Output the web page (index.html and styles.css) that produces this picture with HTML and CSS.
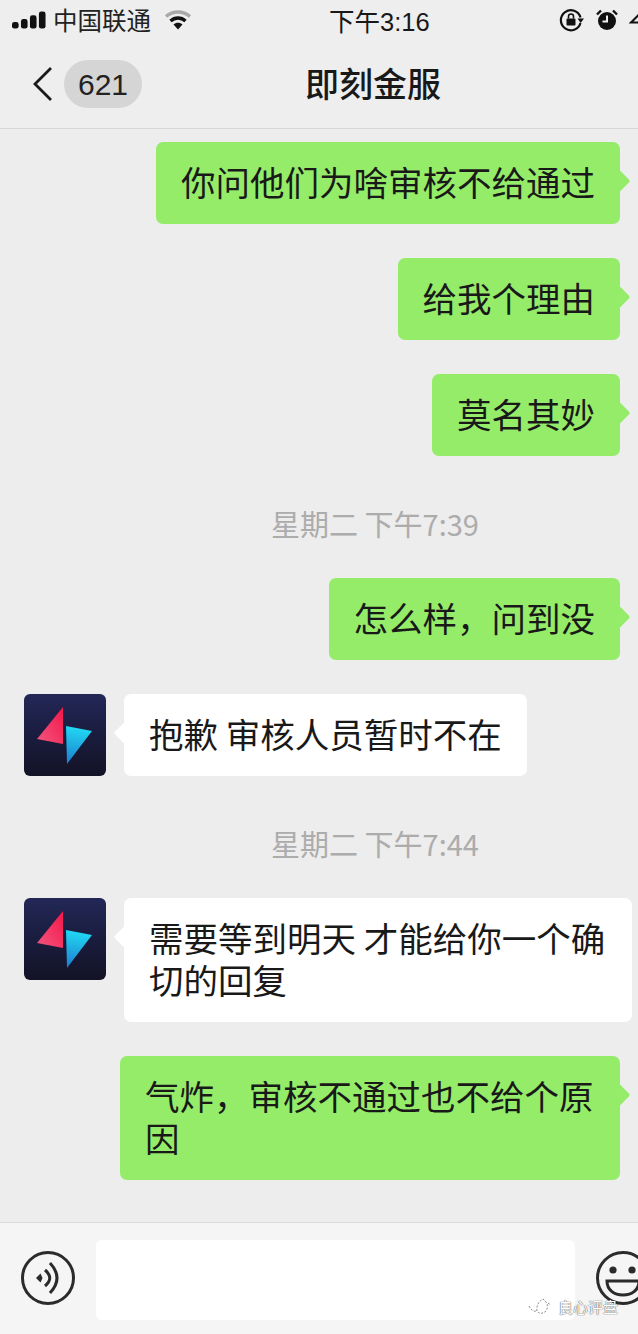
FILE: index.html
```html
<!DOCTYPE html>
<html lang="zh-CN">
<head>
    <meta charset="UTF-8">
    <meta name="viewport" content="width=device-width, initial-scale=1.0">
    <title>即刻金服</title>
    <link rel="stylesheet" href="styles.css">
</head>
<body>
    <div class="phone">
        <header class="top">
            <div class="status">
                <div class="status-left">
                    <svg class="signal" width="34" height="20" viewBox="0 0 36 20">
                        <rect x="0" y="11" width="7" height="7" rx="2.500" fill="#111"/>
                        <rect x="9.500" y="8" width="7" height="10" rx="2.500" fill="#111"/>
                        <rect x="19" y="4" width="7" height="14" rx="2.500" fill="#111"/>
                        <rect x="28.500" y="0" width="7" height="18" rx="2.500" fill="#111"/>
                    </svg>
                    <span class="carrier">中国联通</span>
                    <svg class="wifi" width="28" height="22" viewBox="0 0 28 22">
                        <path d="M2 7.500C9 1.500 19 1.500 26 7.500" fill="none" stroke="#a9a9a9" stroke-width="3.400"/>
                        <path d="M6.500 12C11 8 17 8 21.500 12" fill="none" stroke="#111" stroke-width="3.400"/>
                        <path d="M9.500 15.500C12 13.200 16 13.200 18.500 15.500L14 20.500Z" fill="#111"/>
                    </svg>
                </div>
                <span class="clock">下午3:16</span>
                <div class="status-right">
                    <svg width="26" height="24" viewBox="0 0 26 24">
                        <path d="M21.500 9.500A10 10 0 1 0 21.500 15" fill="none" stroke="#111" stroke-width="2.200"/>
                        <path d="M18.500 10.500H25L21.700 15Z" fill="#111"/>
                        <rect x="7.500" y="10.500" width="9" height="7" rx="1" fill="#111"/>
                        <path d="M9.500 10.500V8.500A2.500 2.500 0 0 1 14.500 8.500V10.500" fill="none" stroke="#111" stroke-width="1.600"/>
                    </svg>
                    <svg class="alarm" width="22" height="24" viewBox="0 0 22 24">
                        <circle cx="11" cy="13" r="9" fill="#111"/>
                        <path d="M11 7.500V13.500H6.500" fill="none" stroke="#efefef" stroke-width="2"/>
                        <path d="M1 6.500L5 2.500M21 6.500L17 2.500" stroke="#111" stroke-width="2.400"/>
                    </svg>
                    <svg class="location" width="12" height="22" viewBox="0 0 12 22">
                        <path d="M12 3.500L2 13.500H12" fill="none" stroke="#111" stroke-width="2.200"/>
                    </svg>
                </div>
            </div>
            <nav class="nav">
                <div class="nav-back">
                    <svg width="22" height="36" viewBox="0 0 22 36">
                        <path d="M19 2L3 18L19 34" fill="none" stroke="#1a1a1a" stroke-width="2.800"/>
                    </svg>
                    <span class="badge">621</span>
                </div>
                <h1 class="title">即刻金服</h1>
            </nav>
        </header>

        <main class="chat">
            <div class="row row-me"><p class="bubble me">你问他们为啥审核不给通过</p></div>
            <div class="row row-me"><p class="bubble me">给我个理由</p></div>
            <div class="row row-me"><p class="bubble me">莫名其妙</p></div>
            <div class="time">星期二 下午7:39</div>
            <div class="row row-me"><p class="bubble me">怎么样，问到没</p></div>
            <div class="row">
                <svg class="avatar" viewBox="0 0 82 82">
                    <use href="#logo"/>
                </svg>
                <p class="bubble them">抱歉 审核人员暂时不在</p>
            </div>
            <div class="time">星期二 下午7:44</div>
            <div class="row">
                <svg class="avatar" viewBox="0 0 82 82">
                    <use href="#logo"/>
                </svg>
                <p class="bubble them wide">需要等到明天 才能给你一个确切的回复</p>
            </div>
            <div class="row row-me"><p class="bubble me long">气炸，审核不通过也不给个原因</p></div>
        </main>

        <footer class="inputbar">
            <svg class="voice" width="54" height="54" viewBox="0 0 54 54">
                <circle cx="27" cy="27" r="25.500" fill="none" stroke="#2b2b2b" stroke-width="3"/>
                <path d="M15 27L19.500 22.500L21.500 27L19.500 31.500Z" fill="#2b2b2b"/>
                <path d="M24 19Q33.500 27 24 35M29 12Q43 27 29 42" fill="none" stroke="#2b2b2b" stroke-width="3"/>
            </svg>
            <div class="field"></div>
            <svg class="smile" width="54" height="54" viewBox="0 0 54 54">
                <circle cx="27" cy="27" r="25.500" fill="none" stroke="#2b2b2b" stroke-width="3"/>
                <circle cx="17" cy="19" r="3.600" fill="#2b2b2b"/>
                <circle cx="36" cy="19" r="3.600" fill="#2b2b2b"/>
                <path d="M11 30H43C43 39 36 44 27 44C18 44 11 39 11 30Z" fill="none" stroke="#2b2b2b" stroke-width="3"/>
            </svg>
        </footer>

        <div class="watermark">
            <svg width="24" height="20" viewBox="0 0 24 20">
                <path d="M1 9C3 13 6 15 9 14M9 14C8 9 11 4 15 2C19 5 21 9 18 14C15 17 11 17 9 14ZM20 6L23 8" fill="none" stroke="#8a8a8a" stroke-width="1" stroke-dasharray="2 1.500"/>
            </svg>
            <span>良心评盘</span>
        </div>

        <svg class="defs" width="0" height="0">
            <defs>
                <linearGradient id="logoBg" x1="0" y1="0" x2="0" y2="1">
                    <stop offset="0" stop-color="#222756"/>
                    <stop offset="1" stop-color="#131226"/>
                </linearGradient>
                <linearGradient id="logoRed" x1="1" y1="0" x2="0" y2="1">
                    <stop offset="0" stop-color="#f5174a"/>
                    <stop offset="1" stop-color="#f0567f"/>
                </linearGradient>
                <linearGradient id="logoBlue" x1="0.500" y1="0" x2="0.400" y2="1">
                    <stop offset="0" stop-color="#21dcf4"/>
                    <stop offset="1" stop-color="#1e7fd0"/>
                </linearGradient>
                <g id="logo">
                    <rect width="82" height="82" rx="6" fill="url(#logoBg)"/>
                    <path d="M39 13V50L13 45Z" fill="url(#logoRed)"/>
                    <path d="M42 32L68 37L43 70Z" fill="url(#logoBlue)"/>
                </g>
            </defs>
        </svg>
    </div>
</body>
</html>
```

FILE: styles.css
```css
* {
    margin: 0;
    padding: 0;
    box-sizing: border-box;
}
body {
    width: 638px;
    height: 1334px;
    overflow: hidden;
    background-color: #ededed;
    color: #191919;
    font-family: "Noto Sans CJK SC", "Liberation Sans", sans-serif;
}
.phone {
    position: relative;
    display: flex;
    flex-direction: column;
    width: 638px;
    height: 1334px;
    overflow: hidden;
}

/* top */
.top {
    height: 129px;
    flex: none;
    background-color: #eeeeee;
    border-bottom: 1px solid #d6d6d6;
}
.status {
    display: grid;
    grid-template-columns: 317px auto 1fr;
    align-items: center;
    height: 42px;
    padding-left: 12px;
}
.status-left {
    display: flex;
    align-items: center;
}
.carrier {
    margin-left: 7px;
    margin-bottom: 4px;
    font-size: 24.500px;
    color: #222;
}
.wifi {
    margin-left: 13px;
    margin-bottom: 2px;
}
.clock {
    margin-bottom: 4px;
    font-family: "Liberation Sans", "Noto Sans CJK SC", sans-serif;
    font-size: 25.500px;
    color: #191919;
}
.status-right {
    display: flex;
    align-items: center;
    justify-content: flex-end;
    gap: 12px;
    margin-right: -3px;
    margin-bottom: 2px;
}
.alarm {
    margin-left: -1px;
}
.location {
    margin-left: -1px;
}
.nav {
    display: flex;
    align-items: center;
    justify-content: center;
    position: relative;
    height: 86px;
}
.nav-back {
    position: absolute;
    left: 32px;
    top: 18px;
    display: flex;
    align-items: center;
    gap: 10px;
}
.badge {
    width: 78px;
    height: 48px;
    border-radius: 24px;
    background-color: #d5d5d5;
    font-family: "Liberation Sans", sans-serif;
    font-size: 30px;
    line-height: 50px;
    text-align: center;
    color: #222;
}
.title {
    margin-left: 108px;
    margin-bottom: 6px;
    font-size: 34px;
    font-weight: 500;
    color: #191919;
}

/* messages */
.chat {
    flex: 1;
    padding-top: 13px;
}
.row {
    display: flex;
    align-items: flex-start;
    padding-left: 24px;
    margin-bottom: 34px;
}
.row-me {
    justify-content: flex-end;
    padding-right: 18px;
    padding-left: 0;
}
.bubble {
    position: relative;
    padding: 18px 25px 22px;
    border-radius: 7px;
    font-size: 34.500px;
    line-height: 42px;
    color: #191919;
}
.bubble::after {
    content: "";
    position: absolute;
    top: 31px;
    width: 16px;
    height: 16px;
    transform: rotate(45deg);
    border-radius: 2px;
}
.me {
    background-color: #95ec69;
}
.me::after {
    right: -7px;
    background-color: #95ec69;
}
.them {
    margin-left: 18px;
    background-color: #fff;
}
.them::after {
    left: -7px;
    background-color: #fff;
}
.wide {
    width: 508px;
}
.long {
    width: 500px;
}
.avatar {
    width: 82px;
    height: 82px;
    flex: none;
}
.time {
    margin-top: 47px;
    margin-bottom: 35px;
    height: 40px;
    line-height: 40px;
    padding-left: 112px;
    text-align: center;
    font-size: 29px;
    color: #acacac;
}

/* bottom */
.inputbar {
    display: flex;
    align-items: flex-start;
    flex: none;
    height: 112px;
    padding: 17px 0 0 21px;
    background-color: #f5f5f5;
    border-top: 1px solid #dcdcdc;
}
.voice {
    margin-top: 11px;
    flex: none;
}
.field {
    width: 479px;
    height: 80px;
    flex: none;
    margin-left: 21px;
    background-color: #fff;
    border-radius: 6px;
}
.smile {
    margin-top: 11px;
    margin-left: 21px;
    flex: none;
}
.watermark {
    position: absolute;
    left: 528px;
    top: 1296px;
    display: flex;
    align-items: center;
    gap: 6px;
    font-size: 15px;
    color: #fff;
    text-shadow: 0 0 1px #555, 0 0 1px #555;
}
.defs {
    position: absolute;
}
```
